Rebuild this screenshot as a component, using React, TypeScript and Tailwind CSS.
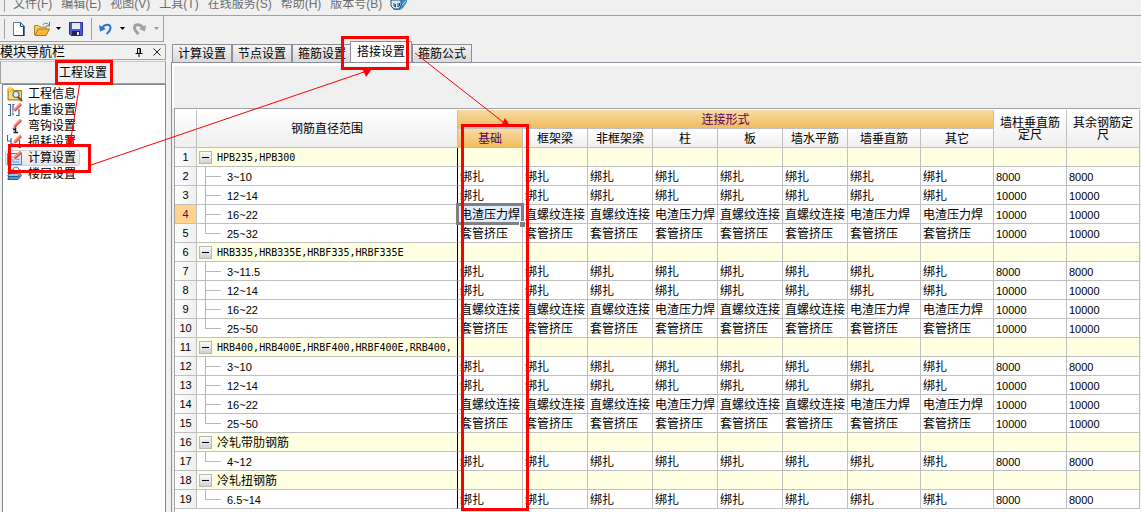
import React from "react";
import clsx from "clsx";

const BIND = "绑扎";
const SLAG = "电渣压力焊";
const SCREW = "直螺纹连接";
const SLEEVE = "套管挤压";

const menus = ["文件(F)", "编辑(E)", "视图(V)", "工具(T)", "在线服务(S)", "帮助(H)", "版本号(B)"];

const tabs = ["计算设置", "节点设置", "箍筋设置", "搭接设置", "箍筋公式"];

const joints = ["基础", "框架梁", "非框架梁", "柱", "板", "墙水平筋", "墙垂直筋", "其它"];

const mixed = [SCREW, SCREW, SCREW, SLAG, SCREW, SCREW, SLAG, SLAG];

type Row = {
  name: string;
  group?: boolean;
  last?: boolean;
  cells?: string[];
  size?: string;
};

const same = (value: string) => joints.map(() => value);

const rows: Row[] = [
  { name: "HPB235,HPB300", group: true },
  { name: "3~10", cells: same(BIND), size: "8000" },
  { name: "12~14", cells: same(BIND), size: "10000" },
  { name: "16~22", cells: [SLAG, ...mixed.slice(1)], size: "10000" },
  { name: "25~32", cells: same(SLEEVE), size: "10000", last: true },
  { name: "HRB335,HRB335E,HRBF335,HRBF335E", group: true },
  { name: "3~11.5", cells: same(BIND), size: "8000" },
  { name: "12~14", cells: same(BIND), size: "10000" },
  { name: "16~22", cells: mixed, size: "10000" },
  { name: "25~50", cells: same(SLEEVE), size: "10000", last: true },
  { name: "HRB400,HRB400E,HRBF400,HRBF400E,RRB400,", group: true },
  { name: "3~10", cells: same(BIND), size: "8000" },
  { name: "12~14", cells: same(BIND), size: "10000" },
  { name: "16~22", cells: mixed, size: "10000" },
  { name: "25~50", cells: same(SLEEVE), size: "10000", last: true },
  { name: "冷轧带肋钢筋", group: true },
  { name: "4~12", cells: same(BIND), size: "8000", last: true },
  { name: "冷轧扭钢筋", group: true },
  { name: "6.5~14", cells: same(BIND), size: "8000", last: true },
];

const SELECTED_ROW = 3;

const line = "border-r border-b border-[#c0c0c0]";
const plainHead = "bg-linear-to-b from-white to-[#efefef] font-normal";
const orangeHead = "bg-linear-to-b from-[#f8daa2] to-[#f0bd5c] font-normal text-[#5a005a]";
const mono = "font-['DejaVu_Sans_Mono','Noto_Sans_CJK_SC',monospace] text-[10px]";
const cellText = "pt-[2px] pr-0 pb-0 pl-[2px] leading-4 whitespace-nowrap";

function Pencil() {
  return (
    <>
      <path d="M5.500 10.500l1-3 2 2z" fill="#f6d9a8" />
      <path d="M6.500 7.500L13 1l2 2-6.500 6.500z" fill="#e8432e" />
      <path d="M7 7l6-6 1 1-6 6z" fill="#ff9b80" />
      <path d="M5 11l1-1.500.5.5z" fill="#222" />
    </>
  );
}

function ProjectIcon() {
  return (
    <svg width="16" height="16" viewBox="0 0 16 16">
      <path d="M1 3h5l1 1.500h7.500V14H1z" fill="#e9b949" stroke="#a9771c" />
      <path d="M2 6h12v7H2z" fill="#f7d980" />
      <circle cx="9" cy="8.500" r="3" fill="#dceffc" stroke="#5c6d80" strokeWidth="1.200" />
      <path d="M11 11l4 4" stroke="#7b4a1c" strokeWidth="2" />
      <path d="M3 0v6M0 3h6M1 1l4 4M5 1L1 5" stroke="#ffd52e" />
    </svg>
  );
}

function WeightIcon() {
  return (
    <svg width="16" height="16" viewBox="0 0 16 16">
      <path d="M1 2.500h2.500v11H1M7.500 2.500H6v7M12 7v6.500H9M6 11v2.500" fill="none" stroke="#3d5f95" strokeWidth="1.200" />
      <Pencil />
    </svg>
  );
}

function HookIcon() {
  return (
    <svg width="16" height="16" viewBox="0 0 16 16">
      <path d="M6 9.500h2.500v5M6.500 14.500h4.500M8.500 11.500H6" fill="none" stroke="#222" strokeWidth="1.500" />
      <Pencil />
    </svg>
  );
}

function LossIcon() {
  return (
    <svg width="16" height="16" viewBox="0 0 16 16">
      <path d="M.5 1v6h3.500V4M4 7v3h3.500M12.500 6v7.500H14M11.500 13.500L8.500 10.500" fill="none" stroke="#3d67a8" strokeWidth="1.200" />
      <Pencil />
    </svg>
  );
}

function CalcIcon() {
  return (
    <svg width="16" height="16" viewBox="0 0 16 16">
      <path d="M.5 3.500h14v11H.5z" fill="#cfe3fb" stroke="#4a80c8" />
      <path d="M2.500 7h3M2.500 9.500h3M2.500 12h10M9.500 9.500h3" stroke="#6d9add" />
      <Pencil />
    </svg>
  );
}

function FloorIcon() {
  return (
    <svg width="16" height="16" viewBox="0 0 16 16">
      <path d="M1 12l3-2h10l-3 3.500H1z" fill="#4f9ad6" stroke="#1d5f9e" />
      <path d="M1 9l3-2h10l-3 3.500H1z" fill="#8cc5ee" stroke="#1d5f9e" />
      <path d="M1 6l3-2h10l-3 3.500H1z" fill="#bfe2f8" stroke="#1d5f9e" />
      <circle cx="9" cy="4" r="3" fill="#eef7fd" stroke="#75828f" />
      <path d="M11 6l3.500 4" stroke="#d0782a" strokeWidth="2" />
    </svg>
  );
}

const navItems = [
  { label: "工程信息", icon: <ProjectIcon /> },
  { label: "比重设置", icon: <WeightIcon /> },
  { label: "弯钩设置", icon: <HookIcon /> },
  { label: "损耗设置", icon: <LossIcon /> },
  { label: "计算设置", icon: <CalcIcon />, active: true },
  { label: "楼层设置", icon: <FloorIcon /> },
];

function Caret({ muted }: { muted?: boolean }) {
  return (
    <svg width="5" height="3" viewBox="0 0 5 3" className={muted ? "text-[#9a9a9a]" : "text-black"}>
      <path d="M0 0h5L2.500 3z" fill="currentColor" />
    </svg>
  );
}

function MenuBar() {
  return (
    <nav className="flex h-4 items-start overflow-hidden border-b border-[#a0a0a0] pl-1 text-[#6d6d6d]">
      <span className="mr-2 h-3 border-l border-[#a0a0a0]" />
      <div className="-mt-1 flex gap-[9px]">
        {menus.map((item) => (
          <button key={item} className="leading-4 whitespace-nowrap">
            {item}
          </button>
        ))}
      </div>
      <svg width="18" height="10" viewBox="0 0 18 10" className="ml-2">
        <path d="M1 0h16v2l-4 6-3 2H4L1 6z" fill="#3e8cc9" />
        <path d="M1 0h10v6l-2 3H4L1 6z" fill="#d7edf8" stroke="#1c4d7c" />
        <path d="M4 3v3l1.500 1V4M8 3v4l1.500-1V3" fill="none" stroke="#1c4d7c" />
        <path d="M12 5l4-4" stroke="#9fe0f5" />
      </svg>
    </nav>
  );
}

function Toolbar() {
  return (
    <div className="flex h-[26px] w-[164px] items-center border-r border-b border-[#a0a0a0] pl-1">
      <span className="h-5 border-l border-[#a0a0a0]" />
      <button aria-label="新建" className="ml-2">
        <svg width="12" height="14" viewBox="0 0 12 14">
          <path d="M.5.5h7l4 4v9H.5z" fill="#fff" stroke="#5c7896" />
          <path d="M10.500 5v8.500M1 13.500h10.500" stroke="#1e3a5c" />
          <path d="M7.500.5v4h4z" fill="#c6daf0" stroke="#3a5878" />
        </svg>
      </button>
      <button aria-label="打开" className="ml-[9px]">
        <svg width="17" height="14" viewBox="0 0 17 14">
          <path d="M.5 13V3.500h4l1.500 1.500h6V7" fill="#f5cd6b" stroke="#b78322" />
          <path d="M1 13.500l3-6.500h11.500l-3.500 6.500z" fill="#f9b83c" stroke="#ad7717" />
          <path d="M9 3c1-2 4-2.500 5.500-.5M15.500 0v4H12" fill="none" stroke="#4b7296" />
        </svg>
      </button>
      <button aria-label="打开列表" className="ml-[5px]">
        <Caret />
      </button>
      <button aria-label="保存" className="ml-2">
        <svg width="14" height="14" viewBox="0 0 14 14">
          <path d="M.5.500h13v13H2L.5 12z" fill="#4d5bd0" stroke="#2b2f8c" />
          <path d="M3 1h8v6H3z" fill="#e6ecfb" />
          <path d="M3 9h8v4.500H3z" fill="#1e2350" />
          <path d="M8 10h2v3H8z" fill="#e6ecfb" />
        </svg>
      </button>
      <span className="ml-2 h-[22px] border-l border-[#a0a0a0]" />
      <button aria-label="撤销" className="ml-[7px]">
        <svg width="13" height="12" viewBox="0 0 13 12">
          <path d="M3 5.500C5 1 11 .5 11.500 4.500c.2 3-2 4.500-4 6.500" fill="none" stroke="#2f73c9" strokeWidth="2" />
          <path d="M0 2l1 6.500L7 6z" fill="#2f73c9" />
        </svg>
      </button>
      <button aria-label="撤销列表" className="ml-2">
        <Caret />
      </button>
      <button aria-label="重做" className="ml-2">
        <svg width="13" height="12" viewBox="0 0 13 12">
          <path d="M10 5.500C8 1 2 .5 1.500 4.500c-.2 3 2 4.500 4 6.500" fill="none" stroke="#a2a2a2" strokeWidth="3" />
          <path d="M13 2l-1 6.500L6 6z" fill="#a2a2a2" />
        </svg>
      </button>
      <button aria-label="重做列表" className="ml-2">
        <Caret muted />
      </button>
    </div>
  );
}

function Sidebar() {
  return (
    <aside className="flex w-[166px] shrink-0 flex-col pt-[2px]">
      <div className="flex h-4 items-center border-t border-r border-b border-[#a0a0a0]">
        <h2 className="text-[13px] leading-4 whitespace-nowrap">模块导航栏</h2>
        <button aria-label="固定" className="ml-auto">
          <svg width="8" height="9" viewBox="0 0 8 9">
            <path d="M2.500 5V.500h3V5M.500 5.500h7M4 6v3M5 1v4" fill="none" stroke="#000" />
          </svg>
        </button>
        <button aria-label="关闭" className="mr-1 ml-[10px]">
          <svg width="8" height="8" viewBox="0 0 8 8">
            <path d="M.5.5l7 7M7.500.5l-7 7" stroke="#222" />
          </svg>
        </button>
      </div>
      <button className="mt-px h-[23px] w-full border border-[#a0a0a0] border-t-[#c8c8c8] leading-5">
        工程设置
      </button>
      <ul className="ml-[2px] flex-1 border-x border-t border-[#828790] bg-white pt-px pl-[2px]">
        {navItems.map((item) => (
          <li key={item.label} className="flex">
            <button
              className={clsx(
                "flex h-4 items-center gap-[5px] rounded-xs pr-1 pl-[2px] leading-4",
                item.active && "bg-linear-to-b from-[#fafafa] to-[#e4e4e4] outline -outline-offset-1 outline-[#d2d2d2]"
              )}
            >
              {item.icon}
              {item.label}
            </button>
          </li>
        ))}
      </ul>
    </aside>
  );
}

function Tabs() {
  return (
    <div className="flex h-5 items-end pl-px">
      {tabs.map((tab) => (
        <button
          key={tab}
          className={clsx(
            "border-x border-t border-[#8c8e99] whitespace-nowrap",
            tab === "搭接设置"
              ? "relative -ml-[2px] h-[21px] bg-white px-[6px] pb-px"
              : "h-[18px] bg-linear-to-b from-[#f4f4f4] to-[#d9d9d9] px-[5px] pt-px leading-4"
          )}
        >
          {tab}
        </button>
      ))}
    </div>
  );
}

function NameCell({ row }: { row: Row }) {
  if (row.group) {
    return (
      <div className="flex h-[18px] items-center gap-[5px] overflow-hidden pl-[2px]">
        <button
          aria-label="折叠"
          className="flex size-[13px] shrink-0 items-center justify-center border border-[#b4b8bd] bg-linear-to-b from-[#fafafa] to-[#cdd2d8]"
        >
          <span className="h-px w-[7px] bg-black" />
        </button>
        <span className={clsx("pt-[2px] leading-4", /[A-Z]/.test(row.name) && mono)}>{row.name}</span>
      </div>
    );
  }
  return (
    <div className="flex h-[18px] items-center gap-[6px] pl-2">
      <span className="flex w-4 flex-col self-stretch">
        <span className="h-[10px] border-b border-l border-[#b8b8b8]" />
        {!row.last && <span className="-mb-px flex-1 border-l border-[#b8b8b8]" />}
      </span>
      <span className="pt-[2px] text-[11px] leading-4">{row.name}</span>
    </div>
  );
}

function Grid() {
  return (
    <div className="mr-px ml-[2px] border-t border-l border-[#a0a0a8] bg-white pt-px">
      <table className="w-full table-fixed border-separate border-spacing-0">
        <colgroup>
          <col className="w-[22px]" />
          <col />
          {joints.map((joint, i) => (
            <col key={joint} className={i < 6 ? "w-[65px]" : "w-[73px]"} />
          ))}
          <col className="w-[73px]" />
          <col className="w-[73px]" />
        </colgroup>
        <thead>
          <tr className="h-[19px]">
            <th rowSpan={2} className={clsx(line, plainHead, "p-0")} />
            <th rowSpan={2} className={clsx(line, plainHead, "p-0")}>
              钢筋直径范围
            </th>
            <th colSpan={8} className={clsx(line, orangeHead, "p-0 pt-[2px] leading-4")}>
              连接形式
            </th>
            <th rowSpan={2} className={clsx(line, plainHead, "px-1 py-0 leading-3")}>
              墙柱垂直筋定尺
            </th>
            <th rowSpan={2} className={clsx(line, plainHead, "px-1 py-0 leading-3")}>
              其余钢筋定尺
            </th>
          </tr>
          <tr className="h-[19px]">
            {joints.map((joint, i) => (
              <th key={joint} className={clsx(line, i === 0 ? orangeHead : plainHead, "p-0 pt-[2px] leading-4")}>
                {joint}
              </th>
            ))}
          </tr>
        </thead>
        <tbody>
          {rows.map((row, r) => (
            <tr key={r} className={clsx("h-[19px]", row.group ? "bg-[#ffffe1]" : "bg-white")}>
              <th
                className={clsx(
                  line,
                  "p-0 text-[11px] leading-[18px] font-normal",
                  r === SELECTED_ROW
                    ? "bg-[#ffd58d] text-[#5a005a]"
                    : "bg-linear-to-r from-white to-[#efefef]"
                )}
              >
                {r + 1}
              </th>
              <td className="border-r border-b border-r-black border-b-[#c0c0c0] p-0 whitespace-nowrap">
                <NameCell row={row} />
              </td>
              {joints.map((joint, c) => {
                const selected = r === SELECTED_ROW && c === 0;
                return (
                  <td key={joint} className={clsx(line, cellText, selected && "relative bg-[#e0eeff]")}>
                    {row.cells?.[c]}
                    {selected && (
                      <>
                        <span className="absolute -top-[2px] -right-[2px] -bottom-[2px] -left-[2px] border-3 border-[#808080]" />
                        <span className="absolute -right-[3px] -bottom-[4px] size-[6px] border-t border-l border-white bg-[#808080]" />
                      </>
                    )}
                  </td>
                );
              })}
              <td className={clsx(line, cellText, "text-[11px]")}>{row.size}</td>
              <td className={clsx(line, cellText, "text-[11px]")}>{row.size}</td>
            </tr>
          ))}
        </tbody>
      </table>
    </div>
  );
}

// red boxes and arrows that walk through the steps
function Markup() {
  return (
    <svg
      width="530"
      height="512"
      viewBox="0 0 530 512"
      className="pointer-events-none absolute top-0 left-0"
      fill="none"
      stroke="#ff0000"
    >
      <g strokeWidth="3">
        <path d="M56.500 61.500h55v22h-55z" />
        <path d="M342.500 37.500h65v31h-65z" />
        <path d="M9.500 145.500h80v26h-80z" />
        <path d="M462.500 125.500h65v384h-65z" />
      </g>
      <path d="M79.500 85L71 138M91 165L364 72M415 53L503 122" />
      <g fill="#ff0000" stroke="none">
        <path d="M69 148l-2-12 8 1z" />
        <path d="M372 69l-10-1 4 9z" />
        <path d="M511 127l-10-1 4-8z" />
      </g>
    </svg>
  );
}

export default function App() {
  return (
    <div className="relative flex min-h-screen flex-col overflow-hidden bg-[#f0f0f0] font-['Liberation_Sans','Noto_Sans_CJK_SC',sans-serif] text-[12px] text-black">
      <MenuBar />
      <Toolbar />
      <div className="flex flex-1">
        <Sidebar />
        <main className="ml-[5px] flex min-w-0 flex-1 flex-col">
          <Tabs />
          <section className="flex flex-1 flex-col border-t border-l border-[#8c8e99]">
            <div className="h-[45px] border-t-3 border-l-2 border-white" />
            <Grid />
            <div className="ml-[2px] flex-1 border-l border-[#a0a0a8] bg-white" />
          </section>
        </main>
      </div>
      <Markup />
    </div>
  );
}
